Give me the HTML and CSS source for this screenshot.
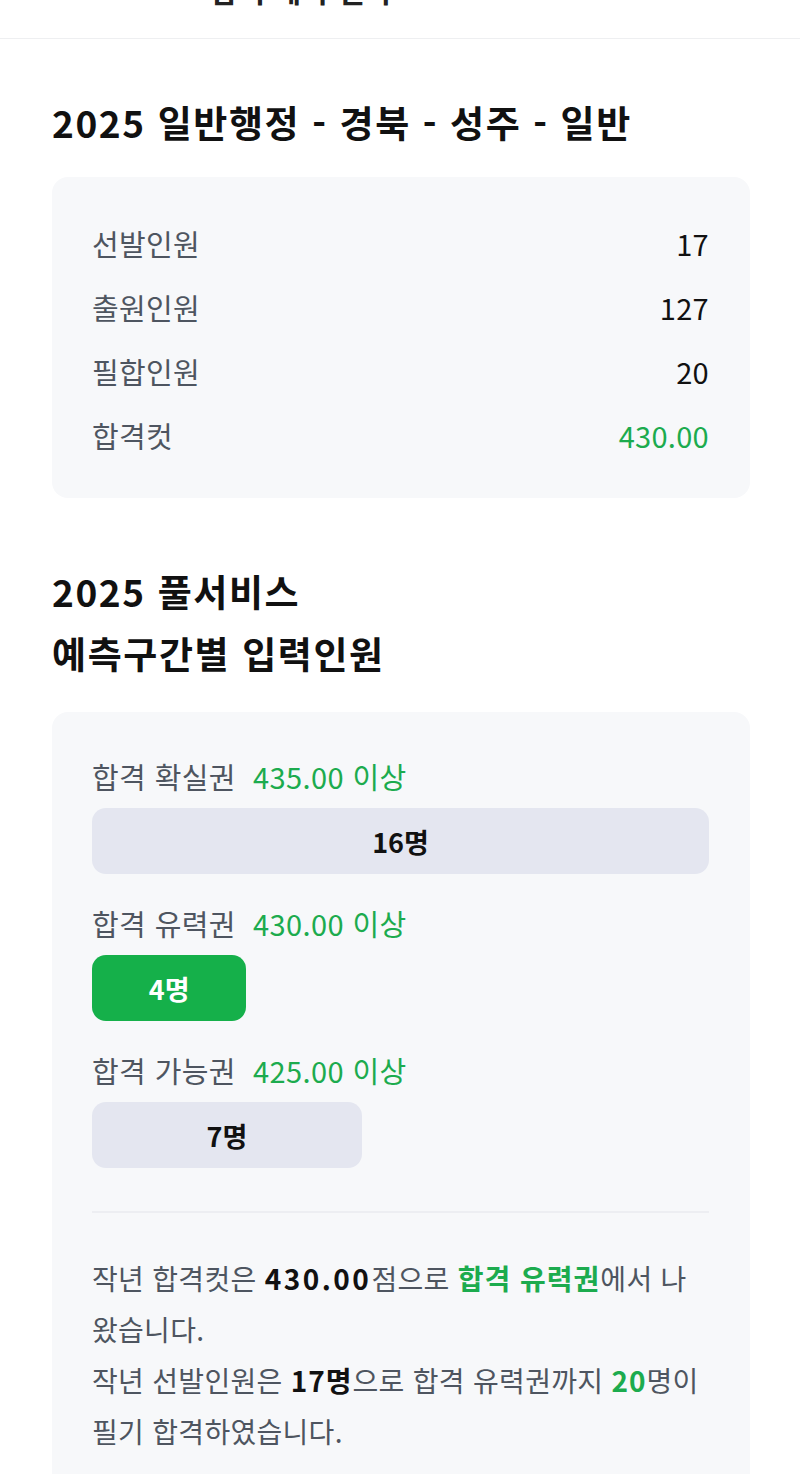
FILE: index.html
```html
<!DOCTYPE html>
<html lang="ko">
<head>
  <meta charset="UTF-8" />
  <meta name="viewport" content="width=device-width, initial-scale=1.0"/>
  <title>합격 예측</title>
  <link rel="stylesheet" href="styles.css">
</head>
<body>
  <!-- Top bar (scrolled, only the bottom edge is visible) -->
  <header class="top-bar">
    <span class="back">&#8592;</span>
    <span class="top-title">합격 예측 결과</span>
  </header>

  <main class="page">
    <!-- Last year's result -->
    <section class="section">
      <h2 class="section-title">2025 일반행정 - 경북 - 성주 - 일반</h2>
      <div class="card stats">
        <div class="stat-row"><span class="label">선발인원</span><span class="value">17</span></div>
        <div class="stat-row"><span class="label">출원인원</span><span class="value">127</span></div>
        <div class="stat-row"><span class="label">필합인원</span><span class="value">20</span></div>
        <div class="stat-row"><span class="label">합격컷</span><span class="value green">430.00</span></div>
      </div>
    </section>

    <!-- Predicted ranges -->
    <section class="section">
      <h2 class="section-title">2025 풀서비스<br>예측구간별 입력인원</h2>
      <div class="card ranges">
        <div class="range">
          <div class="range-head"><span class="label">합격 확실권</span><span class="green">435.00 이상</span></div>
          <div class="bar" style="width: 100%">16명</div>
        </div>
        <div class="range">
          <div class="range-head"><span class="label">합격 유력권</span><span class="green">430.00 이상</span></div>
          <div class="bar active" style="width: 25%">4명</div>
        </div>
        <div class="range">
          <div class="range-head"><span class="label">합격 가능권</span><span class="green">425.00 이상</span></div>
          <div class="bar" style="width: 43.75%">7명</div>
        </div>

        <hr class="divider">

        <p class="summary">
          작년 합격컷은 <b class="num">430.00</b>점으로 <b class="green">합격 유력권</b>에서 나왔습니다.<br>
          작년 선발인원은 <b>17명</b>으로 합격 유력권까지 <b class="green">20</b>명이 필기 합격하였습니다.
        </p>
      </div>
    </section>
  </main>
</body>
</html>
```

FILE: styles.css
```css
/* Basic Reset */
* {
  margin: 0;
  padding: 0;
  box-sizing: border-box;
}

body {
  font-family: "Noto Sans CJK KR", "Noto Sans", sans-serif;
  background-color: #fff;
  color: #111;
}

/* Top bar */
.top-bar {
  height: 62px;
  margin-top: -23px;
  display: flex;
  align-items: flex-start;
  gap: 160px;
  padding: 0 22px;
  border-bottom: 1px solid #eeeff1;
  overflow: hidden;
}

.top-bar .back {
  font-size: 28px;
  line-height: 24px;
  color: #222;
}

.top-bar .top-title {
  font-size: 30px;
  line-height: 24px;
  font-weight: 700;
  color: #222;
}

/* Page content */
.page {
  padding: 52px 50px 0 52px;
}

.section {
  margin-bottom: 62px;
}

.section-title {
  font-size: 37px;
  font-weight: 700;
  line-height: 62px;
  letter-spacing: 1.6px;
  color: #111;
  margin-bottom: 28px;
}

.section:first-child .section-title {
  margin-bottom: 24px;
}

.card {
  background-color: #f7f8fa;
  border-radius: 16px;
}

.label {
  color: #4e5560;
}

.green {
  color: #1cab4e;
}

/* Stats card */
.stats {
  padding: 34px 41px 31px 40px;
}

.stat-row {
  display: flex;
  justify-content: space-between;
  align-items: center;
  height: 64px;
  font-size: 29px;
  letter-spacing: 0.3px;
}

/* Ranges card */
.ranges {
  padding: 40px 41px 40px 40px;
}

.range {
  margin-bottom: 25px;
}

.range-head {
  display: flex;
  gap: 17px;
  font-size: 29px;
  letter-spacing: 0.4px;
  line-height: 48px;
  margin-bottom: 8px;
}

.bar {
  height: 66px;
  border-radius: 14px;
  background-color: #e4e6f0;
  display: flex;
  align-items: center;
  justify-content: center;
  font-size: 27px;
  font-weight: 700;
  color: #111;
}

.bar.active {
  background-color: #15b04a;
  color: #fff;
}

.divider {
  border: none;
  border-top: 2px solid #edeef2;
  margin: 43px 0 40px;
}

.summary {
  font-size: 28px;
  letter-spacing: 0.3px;
  line-height: 51px;
  color: #4e5560;
}

.summary b {
  font-weight: 700;
  color: #111;
  letter-spacing: 1px;
}

.summary b.num {
  letter-spacing: 2.5px;
}

.summary b.green {
  color: #1cab4e;
}
```
